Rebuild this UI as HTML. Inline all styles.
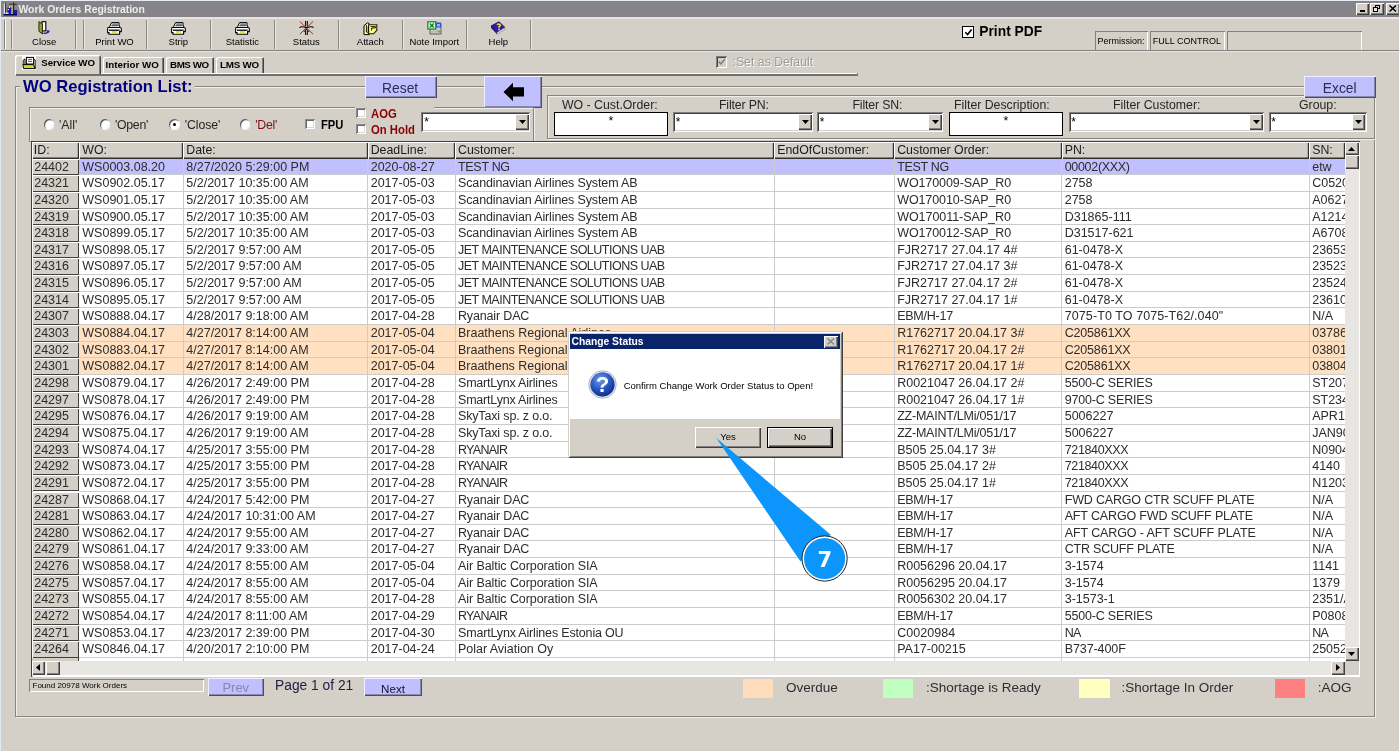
<!DOCTYPE html><html><head><meta charset="utf-8"><title>Work Orders Registration</title><style>
html,body{margin:0;padding:0;}
body{width:1399px;height:751px;overflow:hidden;background:#d4d0c8;position:relative;font-family:"Liberation Sans",sans-serif;color:#000;}
div{position:absolute;box-sizing:border-box;}
.t{white-space:pre;}
.tb{font-size:9.5px;line-height:11px;text-align:center;white-space:pre;color:#000;}
.sepd{background:#808080;width:1px;}
.sepl{background:#fff;width:1px;}
.raised{box-shadow:inset 1px 1px 0 #fff,inset -1px -1px 0 #404040,inset -2px -2px 0 #808080;}
.btnl{background:#c0c0ff;box-shadow:inset 1px 1px 0 #f0f0ff,inset -1px -1px 0 #4c4c66,inset -2px -2px 0 #8888b4;text-align:center;white-space:pre;}
.sunk{box-shadow:inset 1px 1px 0 #808080,inset -1px -1px 0 #fff,inset 2px 2px 0 #404040,inset -2px -2px 0 #d4d0c8;background:#fff;}
.chk{box-shadow:inset 1px 1px 0 #8c8c8c,inset -1px -1px 0 #fff,inset 2px 2px 0 #6a6a6a,inset -2px -2px 0 #dcd9d2;background:#fff;}
.sunk1{box-shadow:inset 1px 1px 0 #808080,inset -1px -1px 0 #fff;}
.etch{border:1px solid #86847f;box-shadow:1px 1px 0 #f0efec,inset 1px 1px 0 #f0efec;}
.lbl{font-size:12.3px;line-height:14px;white-space:pre;color:#262626;}
.cell{font-size:12.5px;white-space:pre;overflow:hidden;color:#2c2c2c;padding-left:3px;}
.hd{background:#d4d0c8;font-size:12.35px;white-space:pre;overflow:hidden;color:#1a1a1a;padding-left:3px;box-shadow:inset 1px 1px 0 #fff,inset -1.2px -1.6px 0 #303030;}
.idc{background:#d4d0c8;box-shadow:inset 1px 1px 0 #fff,inset -1px -1px 0 #404040;}
.sbb{background:#d4d0c8;box-shadow:inset 1px 1px 0 #fff,inset -1px -1px 0 #404040,inset -2px -2px 0 #808080;}
.track{background:#e8e6e2;}
.nb{font-family:"Liberation Sans",sans-serif;font-weight:bold;white-space:pre;transform-origin:0 0;}
</style></head><body><div id="root" style="left:0;top:0;width:1399px;height:751px;will-change:transform;">
<div style="left:0px;top:0px;width:1399px;height:751px;background:#d4d0c8;"></div>
<div style="left:0px;top:0px;width:1399px;height:1.3px;background:#e6edf7;"></div>
<div style="left:0px;top:0px;width:1.3px;height:751px;background:#e3eaf3;"></div>
<div style="left:1.3px;top:1.3px;width:1398px;height:15.5px;background:#868488;"></div>
<div style="left:1.3px;top:16.8px;width:1398px;height:2.2px;background:#e5e4e1;"></div>
<svg style="position:absolute;left:0px;top:0px" width="24" height="18" viewBox="0 0 24 18"><rect x="3.8" y="3.6" width="1.1" height="10" fill="#f0f0f0"/><rect x="5" y="3.2" width="1" height="9.6" fill="#34342c"/><rect x="9.2" y="4.6" width="3.8" height="9.4" fill="#a8a880"/><rect x="9" y="3.8" width="7.8" height="1" fill="#383824"/><rect x="13" y="2.4" width="1.1" height="12" fill="#26261a"/><rect x="7.4" y="7.2" width="3.8" height="6.9" rx="1" fill="#1818a0"/><rect x="14.1" y="10" width="3" height="5" rx="0.8" fill="#1818a0"/><rect x="8.8" y="6.8" width="1.3" height="1.1" fill="#fff"/><rect x="7.8" y="9" width="1.2" height="1" fill="#fff"/><rect x="5.6" y="12.6" width="3" height="1.2" fill="#e8e8f4"/><rect x="3.6" y="14" width="13.3" height="1.5" fill="#000058"/></svg>
<div class="t" style="left:18.5px;top:2.5px;font-weight:bold;font-size:10.4px;line-height:13px;color:#ececec;">Work Orders Registration</div>
<div style="left:1356.1px;top:3px;width:13px;height:11.5px;background:#d4d0c8;box-shadow:inset 1px 1px 0 #fff,inset -1px -1px 0 #404040,inset -2px -2px 0 #808080;"></div>
<div style="left:1360.1px;top:10.3px;width:5px;height:1.7px;background:#000;"></div>
<div style="left:1370px;top:3px;width:13.5px;height:11.5px;background:#d4d0c8;box-shadow:inset 1px 1px 0 #fff,inset -1px -1px 0 #404040,inset -2px -2px 0 #808080;"></div>
<div style="left:1375.2px;top:4.6px;width:5px;height:4.6px;border:1px solid #000;border-top:1.7px solid #000;"></div>
<div style="left:1372.8px;top:7.3px;width:5px;height:4.6px;border:1px solid #000;border-top:1.7px solid #000;background:#e8e6e2;"></div>
<div style="left:1386px;top:3px;width:13.5px;height:11.5px;background:#d4d0c8;box-shadow:inset 1px 1px 0 #fff,inset -1px -1px 0 #404040,inset -2px -2px 0 #808080;"></div>
<svg style="position:absolute;left:1389.2px;top:5px" width="8" height="7" viewBox="0 0 8 7"><path d="M0.5 0.5 L7 6.5 M7 0.5 L0.5 6.5" stroke="#000" stroke-width="1.5"/></svg>
<div style="left:4.3px;top:20px;width:1px;height:28.5px;background:#808080;"></div>
<div style="left:5.3px;top:20px;width:1px;height:28.5px;background:#fff;"></div>
<div style="left:11.3px;top:20px;width:1px;height:28.5px;background:#8a8884;"></div>
<div style="left:12.3px;top:20px;width:1px;height:28.5px;background:#ece9e4;"></div>
<div style="left:75.3px;top:20px;width:1px;height:28.5px;background:#8a8884;"></div>
<div style="left:76.3px;top:20px;width:1px;height:28.5px;background:#ece9e4;"></div>
<div style="left:82.6px;top:20px;width:1px;height:28.5px;background:#8a8884;"></div>
<div style="left:83.6px;top:20px;width:1px;height:28.5px;background:#ece9e4;"></div>
<div style="left:146.4px;top:20px;width:1px;height:28.5px;background:#8a8884;"></div>
<div style="left:147.4px;top:20px;width:1px;height:28.5px;background:#ece9e4;"></div>
<div style="left:210.4px;top:20px;width:1px;height:28.5px;background:#8a8884;"></div>
<div style="left:211.4px;top:20px;width:1px;height:28.5px;background:#ece9e4;"></div>
<div style="left:274.3px;top:20px;width:1px;height:28.5px;background:#8a8884;"></div>
<div style="left:275.3px;top:20px;width:1px;height:28.5px;background:#ece9e4;"></div>
<div style="left:338.2px;top:20px;width:1px;height:28.5px;background:#8a8884;"></div>
<div style="left:339.2px;top:20px;width:1px;height:28.5px;background:#ece9e4;"></div>
<div style="left:402.3px;top:20px;width:1px;height:28.5px;background:#8a8884;"></div>
<div style="left:403.3px;top:20px;width:1px;height:28.5px;background:#ece9e4;"></div>
<div style="left:466.4px;top:20px;width:1px;height:28.5px;background:#8a8884;"></div>
<div style="left:467.4px;top:20px;width:1px;height:28.5px;background:#ece9e4;"></div>
<div style="left:530.3px;top:20px;width:1px;height:28.5px;background:#8a8884;"></div>
<div style="left:531.3px;top:20px;width:1px;height:28.5px;background:#ece9e4;"></div>
<div style="left:1.3px;top:49.8px;width:1398px;height:1px;background:#808080;"></div>
<div style="left:1.3px;top:50.8px;width:1398px;height:1px;background:#e8e6e2;"></div>
<div style="left:37.7px;top:21px;width:13px;height:15px;"><svg width="13" height="14" viewBox="0 0 13 14"><rect x="4" y="0.7" width="3.8" height="9.2" fill="#fff" stroke="#000" stroke-width="1.1"/><path d="M0.9 0.6 L4.4 3 L4.4 13 L0.9 10.2 Z" fill="#98a020" stroke="#202000" stroke-width="0.9"/><path d="M5.5 12.2 Q9 13 10.2 10.4" stroke="#1a1a9a" stroke-width="1.4" fill="none"/><path d="M8.6 9.2 L11.8 9.6 L10.6 12.2 Z" fill="#1a1a9a"/></svg></div>
<div class="tb" style="left:4.2px;top:35.8px;width:80px;">Close</div>
<div style="left:107px;top:21px;width:15px;height:15px;"><svg width="15" height="13" viewBox="0 0 15 13"><path d="M4.6 0.6 L12 0.6 L12 3 L13 5.5 L2.2 5.5 Z" fill="#fff" stroke="#000" stroke-width="1"/><path d="M5.2 2.1 L11 2.1 M4.4 3.7 L11.4 3.7" stroke="#000" stroke-width="0.8"/><path d="M1.4 5.5 L13 5.5 Q14.3 5.5 14.3 6.8 L14.3 9.6 L12.6 9.6 L12.6 12.3 L2 12.3 L2 10.6 L0.6 10.6 L0.6 6.6 Q0.6 5.5 1.4 5.5 Z" fill="#fff" stroke="#000" stroke-width="1.1"/><path d="M2 8.2 L12.6 8.2" stroke="#000" stroke-width="1.3"/><rect x="5" y="9.2" width="5.2" height="1.5" fill="#d0d420"/></svg></div>
<div class="tb" style="left:74.5px;top:35.8px;width:80px;">Print WO</div>
<div style="left:170.9px;top:21px;width:15px;height:15px;"><svg width="15" height="13" viewBox="0 0 15 13"><path d="M4.6 0.6 L12 0.6 L12 3 L13 5.5 L2.2 5.5 Z" fill="#fff" stroke="#000" stroke-width="1"/><path d="M5.2 2.1 L11 2.1 M4.4 3.7 L11.4 3.7" stroke="#000" stroke-width="0.8"/><path d="M1.4 5.5 L13 5.5 Q14.3 5.5 14.3 6.8 L14.3 9.6 L12.6 9.6 L12.6 12.3 L2 12.3 L2 10.6 L0.6 10.6 L0.6 6.6 Q0.6 5.5 1.4 5.5 Z" fill="#fff" stroke="#000" stroke-width="1.1"/><path d="M2 8.2 L12.6 8.2" stroke="#000" stroke-width="1.3"/><rect x="5" y="9.2" width="5.2" height="1.5" fill="#d0d420"/></svg></div>
<div class="tb" style="left:138.4px;top:35.8px;width:80px;">Strip</div>
<div style="left:234.9px;top:21px;width:15px;height:15px;"><svg width="15" height="13" viewBox="0 0 15 13"><path d="M4.6 0.6 L12 0.6 L12 3 L13 5.5 L2.2 5.5 Z" fill="#fff" stroke="#000" stroke-width="1"/><path d="M5.2 2.1 L11 2.1 M4.4 3.7 L11.4 3.7" stroke="#000" stroke-width="0.8"/><path d="M1.4 5.5 L13 5.5 Q14.3 5.5 14.3 6.8 L14.3 9.6 L12.6 9.6 L12.6 12.3 L2 12.3 L2 10.6 L0.6 10.6 L0.6 6.6 Q0.6 5.5 1.4 5.5 Z" fill="#fff" stroke="#000" stroke-width="1.1"/><path d="M2 8.2 L12.6 8.2" stroke="#000" stroke-width="1.3"/><rect x="5" y="9.2" width="5.2" height="1.5" fill="#d0d420"/></svg></div>
<div class="tb" style="left:202.4px;top:35.8px;width:80px;">Statistic</div>
<div style="left:298.8px;top:21px;width:15px;height:15px;"><svg width="15" height="14" viewBox="0 0 15 14"><path d="M0.8 0.5 L14 13.2 M14 0.5 L0.8 13.2" stroke="#c81818" stroke-width="1"/><path d="M0.5 6.6 Q2 5 7.4 6.6 Q13 5 14.5 6.6" stroke="#000" stroke-width="1.1" fill="none"/><path d="M6.6 0 L6.6 5 M8.3 0 L8.3 5 M6.6 14 L6.6 9.5 M8.3 14 L8.3 9.5 M5 10.8 L7.45 8 L10 10.8" stroke="#000" stroke-width="1" fill="none"/></svg></div>
<div class="tb" style="left:266.3px;top:35.8px;width:80px;">Status</div>
<div style="left:362.8px;top:21.5px;width:15px;height:15px;"><svg width="15" height="14" viewBox="0 0 15 14"><path d="M1 3.6 L4.6 0.8 L6.2 1.6 L6.2 12.6 L1 12.6 Z" fill="#ffff98" stroke="#000" stroke-width="1"/><path d="M5.6 2.8 L13.8 2.8 L13.8 8.2 L10.6 11.8 L5.6 11.8 Z" fill="#ffff80" stroke="#202000" stroke-width="1.1"/><path d="M7.6 4.6 L12.4 4.6 L12.4 6 L8.6 6 L8.6 8.6" stroke="#000" stroke-width="0.9" fill="none"/><path d="M3.4 3 L3.4 10 Q4.4 11.2 5.2 10 L5.2 4.5" stroke="#000" stroke-width="0.9" fill="none"/></svg></div>
<div class="tb" style="left:330.3px;top:35.8px;width:80px;">Attach</div>
<div style="left:426.8px;top:20.6px;width:15px;height:15px;"><svg width="15" height="14" viewBox="0 0 15 14"><rect x="3" y="3" width="11" height="10" fill="#c8c8c8" stroke="#606060" stroke-width="1"/><rect x="4.5" y="9.5" width="5" height="2" fill="#a8c8a8"/><rect x="10.5" y="9.5" width="2.5" height="2" fill="#909090"/><rect x="8.5" y="1.5" width="5.5" height="5" fill="#3050d0"/><rect x="10" y="3" width="3" height="2.5" fill="#90b0ff"/><rect x="0.8" y="0.8" width="8" height="7.2" fill="#e8f8e8" stroke="#108020" stroke-width="1.2"/><path d="M2.8 2.5 L6.8 6.5 M6.8 2.5 L2.8 6.5" stroke="#108020" stroke-width="1.5"/></svg></div>
<div class="tb" style="left:394.3px;top:35.8px;width:80px;">Note Import</div>
<div style="left:490.3px;top:21px;width:16px;height:15px;"><svg width="16" height="14" viewBox="0 0 16 14"><path d="M1 5 L9 0.8 L15 6.5 L7 11.5 Z" fill="#3020a0" stroke="#100850" stroke-width="0.8"/><path d="M1 5 L7 11.5 L7 13.2 L1 6.8 Z" fill="#181070"/><path d="M7 11.5 L15 6.5 L15 8.3 L7 13.2 Z" fill="#f0f0f0" stroke="#606060" stroke-width="0.5"/><path d="M7 3.8 Q8.5 2.2 10 3.5 Q10.8 4.6 8.8 5.8 L8.9 6.8" stroke="#ffe040" stroke-width="1.5" fill="none"/><circle cx="9.1" cy="8.4" r="0.9" fill="#ffe040"/></svg></div>
<div class="tb" style="left:458.3px;top:35.8px;width:80px;">Help</div>
<div style="left:961.8px;top:25.8px;width:11.9px;height:11.9px;border:1.6px solid #000;background:#fff;"></div>
<svg style="position:absolute;left:963.5px;top:27.5px" width="9" height="9" viewBox="0 0 9 9"><path d="M1.3 4.2 L3.6 6.6 L7.6 1.6" stroke="#000" stroke-width="1.6" fill="none"/></svg>
<div class="t" style="left:979.3px;top:23.5px;font-weight:bold;font-size:13.8px;line-height:16px;color:#000;">Print PDF</div>
<div style="left:1095px;top:31px;width:52.5px;height:19px;box-shadow:inset 1px 1px 0 #808080,inset -1px 0 0 #fff;"></div>
<div style="left:1150px;top:31px;width:74.5px;height:19px;box-shadow:inset 1px 1px 0 #808080,inset -1px 0 0 #fff;"></div>
<div style="left:1227px;top:31px;width:135px;height:19px;box-shadow:inset 1px 1px 0 #808080,inset -1px 0 0 #fff;"></div>
<div class="t" style="left:1097.5px;top:36px;font-size:9px;line-height:11px;">Permission:</div>
<div class="t" style="left:1152.8px;top:36px;font-size:9px;line-height:11px;">FULL CONTROL</div>
<div style="left:101px;top:73px;width:756px;height:1.2px;background:#fff;"></div>
<div style="left:102.5px;top:57.2px;width:61.5px;height:16.2px;background:#d4d0c8;border-radius:2px 2px 0 0;box-shadow:inset 1px 1px 0 #fff,inset -1px 0 0 #404040,inset -2px 0 0 #808080;"></div>
<div class="t" style="left:105.5px;top:58.6px;font-weight:bold;font-size:9.8px;line-height:12px;">Interior WO</div>
<div style="left:166px;top:57.2px;width:48px;height:16.2px;background:#d4d0c8;border-radius:2px 2px 0 0;box-shadow:inset 1px 1px 0 #fff,inset -1px 0 0 #404040,inset -2px 0 0 #808080;"></div>
<div class="t" style="left:170px;top:58.6px;font-weight:bold;font-size:9.8px;line-height:12px;letter-spacing:-0.45px;">BMS WO</div>
<div style="left:216px;top:57.2px;width:48px;height:16.2px;background:#d4d0c8;border-radius:2px 2px 0 0;box-shadow:inset 1px 1px 0 #fff,inset -1px 0 0 #404040,inset -2px 0 0 #808080;"></div>
<div class="t" style="left:220px;top:58.6px;font-weight:bold;font-size:9.8px;line-height:12px;letter-spacing:-0.25px;">LMS WO</div>
<div style="left:15.2px;top:55.3px;width:86.3px;height:19.6px;background:#d4d0c8;border-radius:2px 2px 0 0;box-shadow:inset 1.2px 1.2px 0 #fff,inset -1px 0 0 #404040,inset -2px 0 0 #808080;"></div>
<div style="left:16.2px;top:74.3px;width:841px;height:1.3px;background:#707070;"></div>
<div style="left:856.6px;top:72.6px;width:1px;height:3px;background:#808080;"></div>
<div style="left:22px;top:56px;width:14px;height:14px;background:#fbfbf8;"></div>
<svg style="position:absolute;left:22px;top:56px" width="14" height="14" viewBox="0 0 14 14"><path d="M1.2 8.6 L1.2 4.2 L3 3 L3 8.6 Z" fill="#d8d8d0" stroke="#000" stroke-width="0.9"/><path d="M11.2 3 L13.2 4 L13.2 12.4 L11.2 9" fill="#e8e8e0" stroke="#000" stroke-width="0.9"/><rect x="4.4" y="1.4" width="7.2" height="6.6" fill="#fff" stroke="#000" stroke-width="1"/><path d="M6 3.4 L10 3.4 M6 5.4 L10 5.4" stroke="#505060" stroke-width="1"/><path d="M0.8 8.6 L11.4 8.6 L13.2 12.6 L1.6 12.6 Z" fill="#c8dc28" stroke="#000" stroke-width="1"/></svg>
<div class="t" style="left:41.2px;top:57px;font-weight:bold;font-size:9.7px;line-height:12px;">Service WO</div>
<div class="sunk" style="left:715.5px;top:56px;width:11px;height:11.5px;background:#d4d0c8;"></div>
<svg style="position:absolute;left:717.5px;top:58px" width="8" height="8" viewBox="0 0 8 8"><path d="M0.8 3.6 L2.9 5.8 L6.8 1.2" stroke="#808080" stroke-width="1.6" fill="none"/></svg>
<div class="t" style="left:733.3px;top:55.6px;font-size:12.3px;line-height:14px;color:#fff;">:Set as Default</div>
<div class="t" style="left:732.5px;top:54.8px;font-size:12.3px;line-height:14px;color:#a09c94;">:Set as Default</div>
<div class="etch" style="left:15.3px;top:86.2px;width:1359.5px;height:631.3px;"></div>
<div style="left:20px;top:80px;width:175px;height:16px;background:#d4d0c8;"></div>
<div class="t" style="left:23px;top:77px;font-weight:bold;font-size:16.6px;line-height:19px;color:#000080;">WO Registration List:</div>
<div class="btnl" style="left:364.8px;top:76px;width:72.2px;height:21.6px;font-size:13.8px;line-height:25.2px;color:#2c2c54;padding-right:1.5px;">Reset</div>
<div class="btnl" style="left:484px;top:76.2px;width:57.6px;height:32.2px;"></div>
<svg style="position:absolute;left:502.5px;top:82px" width="22" height="20.5" viewBox="0 0 22 20" preserveAspectRatio="none"><path d="M0.5 9.7 L10 0.8 L10 5.2 L21 5.2 L21 14.2 L10 14.2 L10 18.8 Z" fill="#000"/></svg>
<div class="etch" style="left:29.3px;top:107.3px;width:505px;height:34.5px;"></div>
<div style="left:43.8px;top:119.2px;width:10.4px;height:10.4px;border-radius:50%;background:#fff;box-shadow:inset 1.2px 1.2px 0.5px #606060,inset -1px -1px 0.5px #f4f4f4;border:0;"></div>
<div style="left:99.8px;top:119.2px;width:10.4px;height:10.4px;border-radius:50%;background:#fff;box-shadow:inset 1.2px 1.2px 0.5px #606060,inset -1px -1px 0.5px #f4f4f4;border:0;"></div>
<div style="left:169.3px;top:119.2px;width:10.4px;height:10.4px;border-radius:50%;background:#fff;box-shadow:inset 1.2px 1.2px 0.5px #606060,inset -1px -1px 0.5px #f4f4f4;border:0;"></div>
<div style="left:172.7px;top:122.6px;width:3.6px;height:3.6px;border-radius:50%;background:#000;"></div>
<div style="left:239.8px;top:119.2px;width:10.4px;height:10.4px;border-radius:50%;background:#fff;box-shadow:inset 1.2px 1.2px 0.5px #606060,inset -1px -1px 0.5px #f4f4f4;border:0;"></div>
<div class="lbl" style="left:59px;top:118px;">&#x27;All&#x27;</div>
<div class="lbl" style="left:115px;top:118px;letter-spacing:-0.3px;">&#x27;Open&#x27;</div>
<div class="lbl" style="left:184.8px;top:118px;letter-spacing:-0.08px;">&#x27;Close&#x27;</div>
<div class="lbl" style="left:255.3px;top:118px;color:#7a1010;letter-spacing:-0.3px;">&#x27;Del&#x27;</div>
<div class="chk" style="left:304.5px;top:118.6px;width:10.5px;height:10.5px;"></div>
<div class="nb" style="left:320.6px;top:117px;font-size:13px;line-height:15px;transform:scaleX(0.86);">FPU</div>
<div style="left:354.5px;top:104px;width:79px;height:34px;background:#d4d0c8;"></div>
<div class="chk" style="left:356.2px;top:108.2px;width:10px;height:10px;"></div>
<div class="chk" style="left:356.2px;top:124.2px;width:10px;height:10px;"></div>
<div class="nb" style="left:370.8px;top:105.8px;font-size:12.8px;line-height:15px;color:#8b0000;transform:scaleX(0.88);">AOG</div>
<div class="nb" style="left:371.2px;top:122.3px;font-size:12.8px;line-height:15px;color:#8b0000;transform:scaleX(0.885);">On Hold</div>
<div class="sunk" style="left:421.4px;top:111.7px;width:108.6px;height:20.1px;"></div>
<div class="sbb" style="left:515.2px;top:113.5px;width:13.6px;height:16.9px;"></div>
<svg style="position:absolute;left:518.5px;top:120.45px" width="7" height="4" viewBox="0 0 7 4"><path d="M0 0 L7 0 L3.5 4 Z" fill="#000"/></svg>
<div class="t" style="left:424.2px;top:114.6px;font-size:12px;line-height:14px;">*</div>
<div class="etch" style="left:546.8px;top:94.8px;width:828px;height:44.7px;"></div>
<div class="btnl" style="left:1303.5px;top:76px;width:72.4px;height:21.6px;font-size:13.8px;line-height:25.2px;color:#2c2c54;">Excel</div>
<div class="lbl" style="left:562px;top:97.5px;">WO - Cust.Order:</div>
<div class="lbl" style="left:719px;top:97.5px;letter-spacing:-0.15px;">Filter PN:</div>
<div class="lbl" style="left:852.5px;top:97.5px;letter-spacing:-0.15px;">Filter SN:</div>
<div class="lbl" style="left:954px;top:97.5px;">Filter Description:</div>
<div class="lbl" style="left:1113px;top:97.5px;">Filter Customer:</div>
<div class="lbl" style="left:1299px;top:97.5px;">Group:</div>
<div style="left:553.8px;top:112.1px;width:114.2px;height:23.7px;border:1.2px solid #000;background:#fff;"></div>
<div class="t" style="left:608.5px;top:114px;font-size:12.3px;line-height:14px;">*</div>
<div class="sunk" style="left:673px;top:111.7px;width:140px;height:20.1px;"></div>
<div class="sbb" style="left:798.2px;top:113.5px;width:13.6px;height:16.9px;"></div>
<svg style="position:absolute;left:801.5px;top:120.45px" width="7" height="4" viewBox="0 0 7 4"><path d="M0 0 L7 0 L3.5 4 Z" fill="#000"/></svg>
<div class="t" style="left:675.8px;top:114.6px;font-size:12px;line-height:14px;">*</div>
<div class="sunk" style="left:817px;top:111.7px;width:126px;height:20.1px;"></div>
<div class="sbb" style="left:928.2px;top:113.5px;width:13.6px;height:16.9px;"></div>
<svg style="position:absolute;left:931.5px;top:120.45px" width="7" height="4" viewBox="0 0 7 4"><path d="M0 0 L7 0 L3.5 4 Z" fill="#000"/></svg>
<div class="t" style="left:819.8px;top:114.6px;font-size:12px;line-height:14px;">*</div>
<div style="left:948.8px;top:112.1px;width:114px;height:23.7px;border:1.2px solid #000;background:#fff;"></div>
<div class="t" style="left:1003.4px;top:114px;font-size:12.3px;line-height:14px;">*</div>
<div class="sunk" style="left:1068.5px;top:111.7px;width:195.5px;height:20.1px;"></div>
<div class="sbb" style="left:1249.2px;top:113.5px;width:13.6px;height:16.9px;"></div>
<svg style="position:absolute;left:1252.5px;top:120.45px" width="7" height="4" viewBox="0 0 7 4"><path d="M0 0 L7 0 L3.5 4 Z" fill="#000"/></svg>
<div class="t" style="left:1071.3px;top:114.6px;font-size:12px;line-height:14px;">*</div>
<div class="sunk" style="left:1268.5px;top:111.7px;width:98px;height:20.1px;"></div>
<div class="sbb" style="left:1351.7px;top:113.5px;width:13.6px;height:16.9px;"></div>
<svg style="position:absolute;left:1355px;top:120.45px" width="7" height="4" viewBox="0 0 7 4"><path d="M0 0 L7 0 L3.5 4 Z" fill="#000"/></svg>
<div class="t" style="left:1271.3px;top:114.6px;font-size:12px;line-height:14px;">*</div>
<div style="left:30.6px;top:141.2px;width:1329.2px;height:535.8px;background:#fff;box-shadow:inset 1.3px 1.3px 0 #404040,inset -1px -1px 0 #fff;"></div>
<div class="hd" style="left:31.8px;top:142.3px;width:47.5px;height:16.3px;line-height:17.5px;padding-left:2px;">ID:</div>
<div class="hd" style="left:79.3px;top:142.3px;width:104px;height:16.3px;line-height:17.5px;">WO:</div>
<div class="hd" style="left:183.3px;top:142.3px;width:184.4px;height:16.3px;line-height:17.5px;">Date:</div>
<div class="hd" style="left:367.7px;top:142.3px;width:87.3px;height:16.3px;line-height:17.5px;">DeadLine:</div>
<div class="hd" style="left:455px;top:142.3px;width:319.2px;height:16.3px;line-height:17.5px;">Customer:</div>
<div class="hd" style="left:774.2px;top:142.3px;width:120px;height:16.3px;line-height:17.5px;">EndOfCustomer:</div>
<div class="hd" style="left:894.2px;top:142.3px;width:167.5px;height:16.3px;line-height:17.5px;">Customer Order:</div>
<div class="hd" style="left:1061.7px;top:142.3px;width:247.5px;height:16.3px;line-height:17.5px;">PN:</div>
<div class="hd" style="left:1309.2px;top:142.3px;width:35.6px;height:16.3px;line-height:17.5px;">SN:</div>
<div style="left:79.3px;top:158.6px;width:1265.5px;height:16.645px;background:#c0c0ff;"></div>
<div class="cell idc" style="left:31.8px;top:158.6px;width:47.5px;height:16.645px;line-height:16.645px;padding-left:2.4px;">24402</div>
<div class="cell" style="left:79.3px;top:158.6px;width:104px;height:16.645px;line-height:16.645px;">WS0003.08.20</div>
<div class="cell" style="left:183.3px;top:158.6px;width:184.4px;height:16.645px;line-height:16.645px;">8/27/2020 5:29:00 PM</div>
<div class="cell" style="left:367.7px;top:158.6px;width:87.3px;height:16.645px;line-height:16.645px;">2020-08-27</div>
<div class="cell" style="left:455px;top:158.6px;width:319.2px;height:16.645px;line-height:16.645px;letter-spacing:-0.309px;">TEST NG</div>
<div class="cell" style="left:894.2px;top:158.6px;width:167.5px;height:16.645px;line-height:16.645px;letter-spacing:-0.309px;">TEST NG</div>
<div class="cell" style="left:1061.7px;top:158.6px;width:247.5px;height:16.645px;line-height:16.645px;letter-spacing:-0.312px;">00002(XXX)</div>
<div class="cell" style="left:1309.2px;top:158.6px;width:35.6px;height:16.645px;line-height:16.645px;">etw</div>
<div style="left:79.3px;top:174.245px;width:1265.5px;height:1px;background:#cccccc;"></div>
<div style="left:79.3px;top:175.245px;width:1265.5px;height:16.645px;background:#fff;"></div>
<div class="cell idc" style="left:31.8px;top:175.245px;width:47.5px;height:16.645px;line-height:16.645px;padding-left:2.4px;">24321</div>
<div class="cell" style="left:79.3px;top:175.245px;width:104px;height:16.645px;line-height:16.645px;">WS0902.05.17</div>
<div class="cell" style="left:183.3px;top:175.245px;width:184.4px;height:16.645px;line-height:16.645px;">5/2/2017 10:35:00 AM</div>
<div class="cell" style="left:367.7px;top:175.245px;width:87.3px;height:16.645px;line-height:16.645px;">2017-05-03</div>
<div class="cell" style="left:455px;top:175.245px;width:319.2px;height:16.645px;line-height:16.645px;letter-spacing:-0.126px;">Scandinavian Airlines System AB</div>
<div class="cell" style="left:894.2px;top:175.245px;width:167.5px;height:16.645px;line-height:16.645px;letter-spacing:-0.096px;">WO170009-SAP_R0</div>
<div class="cell" style="left:1061.7px;top:175.245px;width:247.5px;height:16.645px;line-height:16.645px;">2758</div>
<div class="cell" style="left:1309.2px;top:175.245px;width:35.6px;height:16.645px;line-height:16.645px;">C0520</div>
<div style="left:79.3px;top:190.89px;width:1265.5px;height:1px;background:#cccccc;"></div>
<div style="left:79.3px;top:191.89px;width:1265.5px;height:16.645px;background:#fff;"></div>
<div class="cell idc" style="left:31.8px;top:191.89px;width:47.5px;height:16.645px;line-height:16.645px;padding-left:2.4px;">24320</div>
<div class="cell" style="left:79.3px;top:191.89px;width:104px;height:16.645px;line-height:16.645px;">WS0901.05.17</div>
<div class="cell" style="left:183.3px;top:191.89px;width:184.4px;height:16.645px;line-height:16.645px;">5/2/2017 10:35:00 AM</div>
<div class="cell" style="left:367.7px;top:191.89px;width:87.3px;height:16.645px;line-height:16.645px;">2017-05-03</div>
<div class="cell" style="left:455px;top:191.89px;width:319.2px;height:16.645px;line-height:16.645px;letter-spacing:-0.126px;">Scandinavian Airlines System AB</div>
<div class="cell" style="left:894.2px;top:191.89px;width:167.5px;height:16.645px;line-height:16.645px;letter-spacing:-0.096px;">WO170010-SAP_R0</div>
<div class="cell" style="left:1061.7px;top:191.89px;width:247.5px;height:16.645px;line-height:16.645px;">2758</div>
<div class="cell" style="left:1309.2px;top:191.89px;width:35.6px;height:16.645px;line-height:16.645px;">A0627</div>
<div style="left:79.3px;top:207.535px;width:1265.5px;height:1px;background:#cccccc;"></div>
<div style="left:79.3px;top:208.535px;width:1265.5px;height:16.645px;background:#fff;"></div>
<div class="cell idc" style="left:31.8px;top:208.535px;width:47.5px;height:16.645px;line-height:16.645px;padding-left:2.4px;">24319</div>
<div class="cell" style="left:79.3px;top:208.535px;width:104px;height:16.645px;line-height:16.645px;">WS0900.05.17</div>
<div class="cell" style="left:183.3px;top:208.535px;width:184.4px;height:16.645px;line-height:16.645px;">5/2/2017 10:35:00 AM</div>
<div class="cell" style="left:367.7px;top:208.535px;width:87.3px;height:16.645px;line-height:16.645px;">2017-05-03</div>
<div class="cell" style="left:455px;top:208.535px;width:319.2px;height:16.645px;line-height:16.645px;letter-spacing:-0.126px;">Scandinavian Airlines System AB</div>
<div class="cell" style="left:894.2px;top:208.535px;width:167.5px;height:16.645px;line-height:16.645px;letter-spacing:-0.052px;">WO170011-SAP_R0</div>
<div class="cell" style="left:1061.7px;top:208.535px;width:247.5px;height:16.645px;line-height:16.645px;">D31865-111</div>
<div class="cell" style="left:1309.2px;top:208.535px;width:35.6px;height:16.645px;line-height:16.645px;">A1214</div>
<div style="left:79.3px;top:224.18px;width:1265.5px;height:1px;background:#cccccc;"></div>
<div style="left:79.3px;top:225.18px;width:1265.5px;height:16.645px;background:#fff;"></div>
<div class="cell idc" style="left:31.8px;top:225.18px;width:47.5px;height:16.645px;line-height:16.645px;padding-left:2.4px;">24318</div>
<div class="cell" style="left:79.3px;top:225.18px;width:104px;height:16.645px;line-height:16.645px;">WS0899.05.17</div>
<div class="cell" style="left:183.3px;top:225.18px;width:184.4px;height:16.645px;line-height:16.645px;">5/2/2017 10:35:00 AM</div>
<div class="cell" style="left:367.7px;top:225.18px;width:87.3px;height:16.645px;line-height:16.645px;">2017-05-03</div>
<div class="cell" style="left:455px;top:225.18px;width:319.2px;height:16.645px;line-height:16.645px;letter-spacing:-0.126px;">Scandinavian Airlines System AB</div>
<div class="cell" style="left:894.2px;top:225.18px;width:167.5px;height:16.645px;line-height:16.645px;letter-spacing:-0.096px;">WO170012-SAP_R0</div>
<div class="cell" style="left:1061.7px;top:225.18px;width:247.5px;height:16.645px;line-height:16.645px;">D31517-621</div>
<div class="cell" style="left:1309.2px;top:225.18px;width:35.6px;height:16.645px;line-height:16.645px;">A6708</div>
<div style="left:79.3px;top:240.825px;width:1265.5px;height:1px;background:#cccccc;"></div>
<div style="left:79.3px;top:241.825px;width:1265.5px;height:16.645px;background:#fff;"></div>
<div class="cell idc" style="left:31.8px;top:241.825px;width:47.5px;height:16.645px;line-height:16.645px;padding-left:2.4px;">24317</div>
<div class="cell" style="left:79.3px;top:241.825px;width:104px;height:16.645px;line-height:16.645px;">WS0898.05.17</div>
<div class="cell" style="left:183.3px;top:241.825px;width:184.4px;height:16.645px;line-height:16.645px;">5/2/2017 9:57:00 AM</div>
<div class="cell" style="left:367.7px;top:241.825px;width:87.3px;height:16.645px;line-height:16.645px;">2017-05-05</div>
<div class="cell" style="left:455px;top:241.825px;width:319.2px;height:16.645px;line-height:16.645px;letter-spacing:-0.507px;">JET MAINTENANCE SOLUTIONS UAB</div>
<div class="cell" style="left:894.2px;top:241.825px;width:167.5px;height:16.645px;line-height:16.645px;">FJR2717 27.04.17 4#</div>
<div class="cell" style="left:1061.7px;top:241.825px;width:247.5px;height:16.645px;line-height:16.645px;">61-0478-X</div>
<div class="cell" style="left:1309.2px;top:241.825px;width:35.6px;height:16.645px;line-height:16.645px;">23653</div>
<div style="left:79.3px;top:257.47px;width:1265.5px;height:1px;background:#cccccc;"></div>
<div style="left:79.3px;top:258.47px;width:1265.5px;height:16.645px;background:#fff;"></div>
<div class="cell idc" style="left:31.8px;top:258.47px;width:47.5px;height:16.645px;line-height:16.645px;padding-left:2.4px;">24316</div>
<div class="cell" style="left:79.3px;top:258.47px;width:104px;height:16.645px;line-height:16.645px;">WS0897.05.17</div>
<div class="cell" style="left:183.3px;top:258.47px;width:184.4px;height:16.645px;line-height:16.645px;">5/2/2017 9:57:00 AM</div>
<div class="cell" style="left:367.7px;top:258.47px;width:87.3px;height:16.645px;line-height:16.645px;">2017-05-05</div>
<div class="cell" style="left:455px;top:258.47px;width:319.2px;height:16.645px;line-height:16.645px;letter-spacing:-0.507px;">JET MAINTENANCE SOLUTIONS UAB</div>
<div class="cell" style="left:894.2px;top:258.47px;width:167.5px;height:16.645px;line-height:16.645px;">FJR2717 27.04.17 3#</div>
<div class="cell" style="left:1061.7px;top:258.47px;width:247.5px;height:16.645px;line-height:16.645px;">61-0478-X</div>
<div class="cell" style="left:1309.2px;top:258.47px;width:35.6px;height:16.645px;line-height:16.645px;">23523</div>
<div style="left:79.3px;top:274.115px;width:1265.5px;height:1px;background:#cccccc;"></div>
<div style="left:79.3px;top:275.115px;width:1265.5px;height:16.645px;background:#fff;"></div>
<div class="cell idc" style="left:31.8px;top:275.115px;width:47.5px;height:16.645px;line-height:16.645px;padding-left:2.4px;">24315</div>
<div class="cell" style="left:79.3px;top:275.115px;width:104px;height:16.645px;line-height:16.645px;">WS0896.05.17</div>
<div class="cell" style="left:183.3px;top:275.115px;width:184.4px;height:16.645px;line-height:16.645px;">5/2/2017 9:57:00 AM</div>
<div class="cell" style="left:367.7px;top:275.115px;width:87.3px;height:16.645px;line-height:16.645px;">2017-05-05</div>
<div class="cell" style="left:455px;top:275.115px;width:319.2px;height:16.645px;line-height:16.645px;letter-spacing:-0.507px;">JET MAINTENANCE SOLUTIONS UAB</div>
<div class="cell" style="left:894.2px;top:275.115px;width:167.5px;height:16.645px;line-height:16.645px;">FJR2717 27.04.17 2#</div>
<div class="cell" style="left:1061.7px;top:275.115px;width:247.5px;height:16.645px;line-height:16.645px;">61-0478-X</div>
<div class="cell" style="left:1309.2px;top:275.115px;width:35.6px;height:16.645px;line-height:16.645px;">23524</div>
<div style="left:79.3px;top:290.76px;width:1265.5px;height:1px;background:#cccccc;"></div>
<div style="left:79.3px;top:291.76px;width:1265.5px;height:16.645px;background:#fff;"></div>
<div class="cell idc" style="left:31.8px;top:291.76px;width:47.5px;height:16.645px;line-height:16.645px;padding-left:2.4px;">24314</div>
<div class="cell" style="left:79.3px;top:291.76px;width:104px;height:16.645px;line-height:16.645px;">WS0895.05.17</div>
<div class="cell" style="left:183.3px;top:291.76px;width:184.4px;height:16.645px;line-height:16.645px;">5/2/2017 9:57:00 AM</div>
<div class="cell" style="left:367.7px;top:291.76px;width:87.3px;height:16.645px;line-height:16.645px;">2017-05-05</div>
<div class="cell" style="left:455px;top:291.76px;width:319.2px;height:16.645px;line-height:16.645px;letter-spacing:-0.507px;">JET MAINTENANCE SOLUTIONS UAB</div>
<div class="cell" style="left:894.2px;top:291.76px;width:167.5px;height:16.645px;line-height:16.645px;">FJR2717 27.04.17 1#</div>
<div class="cell" style="left:1061.7px;top:291.76px;width:247.5px;height:16.645px;line-height:16.645px;">61-0478-X</div>
<div class="cell" style="left:1309.2px;top:291.76px;width:35.6px;height:16.645px;line-height:16.645px;">23610</div>
<div style="left:79.3px;top:307.405px;width:1265.5px;height:1px;background:#cccccc;"></div>
<div style="left:79.3px;top:308.405px;width:1265.5px;height:16.645px;background:#fff;"></div>
<div class="cell idc" style="left:31.8px;top:308.405px;width:47.5px;height:16.645px;line-height:16.645px;padding-left:2.4px;">24307</div>
<div class="cell" style="left:79.3px;top:308.405px;width:104px;height:16.645px;line-height:16.645px;">WS0888.04.17</div>
<div class="cell" style="left:183.3px;top:308.405px;width:184.4px;height:16.645px;line-height:16.645px;">4/28/2017 9:18:00 AM</div>
<div class="cell" style="left:367.7px;top:308.405px;width:87.3px;height:16.645px;line-height:16.645px;">2017-04-28</div>
<div class="cell" style="left:455px;top:308.405px;width:319.2px;height:16.645px;line-height:16.645px;letter-spacing:-0.154px;">Ryanair DAC</div>
<div class="cell" style="left:894.2px;top:308.405px;width:167.5px;height:16.645px;line-height:16.645px;letter-spacing:-0.251px;">EBM/H-17</div>
<div class="cell" style="left:1061.7px;top:308.405px;width:247.5px;height:16.645px;line-height:16.645px;letter-spacing:0.097px;">7075-T0 TO 7075-T62/.040&quot;</div>
<div class="cell" style="left:1309.2px;top:308.405px;width:35.6px;height:16.645px;line-height:16.645px;">N/A</div>
<div style="left:79.3px;top:324.05px;width:1265.5px;height:1px;background:#cccccc;"></div>
<div style="left:79.3px;top:325.05px;width:1265.5px;height:16.645px;background:#ffe0c0;"></div>
<div class="cell idc" style="left:31.8px;top:325.05px;width:47.5px;height:16.645px;line-height:16.645px;padding-left:2.4px;">24303</div>
<div class="cell" style="left:79.3px;top:325.05px;width:104px;height:16.645px;line-height:16.645px;">WS0884.04.17</div>
<div class="cell" style="left:183.3px;top:325.05px;width:184.4px;height:16.645px;line-height:16.645px;">4/27/2017 8:14:00 AM</div>
<div class="cell" style="left:367.7px;top:325.05px;width:87.3px;height:16.645px;line-height:16.645px;">2017-05-04</div>
<div class="cell" style="left:455px;top:325.05px;width:319.2px;height:16.645px;line-height:16.645px;letter-spacing:-0.015px;">Braathens Regional Airlines</div>
<div class="cell" style="left:894.2px;top:325.05px;width:167.5px;height:16.645px;line-height:16.645px;">R1762717 20.04.17 3#</div>
<div class="cell" style="left:1061.7px;top:325.05px;width:247.5px;height:16.645px;line-height:16.645px;letter-spacing:-0.178px;">C205861XX</div>
<div class="cell" style="left:1309.2px;top:325.05px;width:35.6px;height:16.645px;line-height:16.645px;">03786</div>
<div style="left:79.3px;top:340.695px;width:1265.5px;height:1px;background:#cccccc;"></div>
<div style="left:79.3px;top:341.695px;width:1265.5px;height:16.645px;background:#ffe0c0;"></div>
<div class="cell idc" style="left:31.8px;top:341.695px;width:47.5px;height:16.645px;line-height:16.645px;padding-left:2.4px;">24302</div>
<div class="cell" style="left:79.3px;top:341.695px;width:104px;height:16.645px;line-height:16.645px;">WS0883.04.17</div>
<div class="cell" style="left:183.3px;top:341.695px;width:184.4px;height:16.645px;line-height:16.645px;">4/27/2017 8:14:00 AM</div>
<div class="cell" style="left:367.7px;top:341.695px;width:87.3px;height:16.645px;line-height:16.645px;">2017-05-04</div>
<div class="cell" style="left:455px;top:341.695px;width:319.2px;height:16.645px;line-height:16.645px;letter-spacing:-0.015px;">Braathens Regional Airlines</div>
<div class="cell" style="left:894.2px;top:341.695px;width:167.5px;height:16.645px;line-height:16.645px;">R1762717 20.04.17 2#</div>
<div class="cell" style="left:1061.7px;top:341.695px;width:247.5px;height:16.645px;line-height:16.645px;letter-spacing:-0.178px;">C205861XX</div>
<div class="cell" style="left:1309.2px;top:341.695px;width:35.6px;height:16.645px;line-height:16.645px;">03801</div>
<div style="left:79.3px;top:357.34px;width:1265.5px;height:1px;background:#cccccc;"></div>
<div style="left:79.3px;top:358.34px;width:1265.5px;height:16.645px;background:#ffe0c0;"></div>
<div class="cell idc" style="left:31.8px;top:358.34px;width:47.5px;height:16.645px;line-height:16.645px;padding-left:2.4px;">24301</div>
<div class="cell" style="left:79.3px;top:358.34px;width:104px;height:16.645px;line-height:16.645px;">WS0882.04.17</div>
<div class="cell" style="left:183.3px;top:358.34px;width:184.4px;height:16.645px;line-height:16.645px;">4/27/2017 8:14:00 AM</div>
<div class="cell" style="left:367.7px;top:358.34px;width:87.3px;height:16.645px;line-height:16.645px;">2017-05-04</div>
<div class="cell" style="left:455px;top:358.34px;width:319.2px;height:16.645px;line-height:16.645px;letter-spacing:-0.015px;">Braathens Regional Airlines</div>
<div class="cell" style="left:894.2px;top:358.34px;width:167.5px;height:16.645px;line-height:16.645px;">R1762717 20.04.17 1#</div>
<div class="cell" style="left:1061.7px;top:358.34px;width:247.5px;height:16.645px;line-height:16.645px;letter-spacing:-0.178px;">C205861XX</div>
<div class="cell" style="left:1309.2px;top:358.34px;width:35.6px;height:16.645px;line-height:16.645px;">03804</div>
<div style="left:79.3px;top:373.985px;width:1265.5px;height:1px;background:#cccccc;"></div>
<div style="left:79.3px;top:374.985px;width:1265.5px;height:16.645px;background:#fff;"></div>
<div class="cell idc" style="left:31.8px;top:374.985px;width:47.5px;height:16.645px;line-height:16.645px;padding-left:2.4px;">24298</div>
<div class="cell" style="left:79.3px;top:374.985px;width:104px;height:16.645px;line-height:16.645px;">WS0879.04.17</div>
<div class="cell" style="left:183.3px;top:374.985px;width:184.4px;height:16.645px;line-height:16.645px;">4/26/2017 2:49:00 PM</div>
<div class="cell" style="left:367.7px;top:374.985px;width:87.3px;height:16.645px;line-height:16.645px;">2017-04-28</div>
<div class="cell" style="left:455px;top:374.985px;width:319.2px;height:16.645px;line-height:16.645px;letter-spacing:-0.197px;">SmartLynx Airlines</div>
<div class="cell" style="left:894.2px;top:374.985px;width:167.5px;height:16.645px;line-height:16.645px;">R0021047 26.04.17 2#</div>
<div class="cell" style="left:1061.7px;top:374.985px;width:247.5px;height:16.645px;line-height:16.645px;letter-spacing:-0.186px;">5500-C SERIES</div>
<div class="cell" style="left:1309.2px;top:374.985px;width:35.6px;height:16.645px;line-height:16.645px;">ST207</div>
<div style="left:79.3px;top:390.63px;width:1265.5px;height:1px;background:#cccccc;"></div>
<div style="left:79.3px;top:391.63px;width:1265.5px;height:16.645px;background:#fff;"></div>
<div class="cell idc" style="left:31.8px;top:391.63px;width:47.5px;height:16.645px;line-height:16.645px;padding-left:2.4px;">24297</div>
<div class="cell" style="left:79.3px;top:391.63px;width:104px;height:16.645px;line-height:16.645px;">WS0878.04.17</div>
<div class="cell" style="left:183.3px;top:391.63px;width:184.4px;height:16.645px;line-height:16.645px;">4/26/2017 2:49:00 PM</div>
<div class="cell" style="left:367.7px;top:391.63px;width:87.3px;height:16.645px;line-height:16.645px;">2017-04-28</div>
<div class="cell" style="left:455px;top:391.63px;width:319.2px;height:16.645px;line-height:16.645px;letter-spacing:-0.197px;">SmartLynx Airlines</div>
<div class="cell" style="left:894.2px;top:391.63px;width:167.5px;height:16.645px;line-height:16.645px;">R0021047 26.04.17 1#</div>
<div class="cell" style="left:1061.7px;top:391.63px;width:247.5px;height:16.645px;line-height:16.645px;letter-spacing:-0.186px;">9700-C SERIES</div>
<div class="cell" style="left:1309.2px;top:391.63px;width:35.6px;height:16.645px;line-height:16.645px;">ST234</div>
<div style="left:79.3px;top:407.275px;width:1265.5px;height:1px;background:#cccccc;"></div>
<div style="left:79.3px;top:408.275px;width:1265.5px;height:16.645px;background:#fff;"></div>
<div class="cell idc" style="left:31.8px;top:408.275px;width:47.5px;height:16.645px;line-height:16.645px;padding-left:2.4px;">24295</div>
<div class="cell" style="left:79.3px;top:408.275px;width:104px;height:16.645px;line-height:16.645px;">WS0876.04.17</div>
<div class="cell" style="left:183.3px;top:408.275px;width:184.4px;height:16.645px;line-height:16.645px;">4/26/2017 9:19:00 AM</div>
<div class="cell" style="left:367.7px;top:408.275px;width:87.3px;height:16.645px;line-height:16.645px;">2017-04-28</div>
<div class="cell" style="left:455px;top:408.275px;width:319.2px;height:16.645px;line-height:16.645px;letter-spacing:-0.157px;">SkyTaxi sp. z o.o.</div>
<div class="cell" style="left:894.2px;top:408.275px;width:167.5px;height:16.645px;line-height:16.645px;letter-spacing:-0.241px;">ZZ-MAINT/LMi/051/17</div>
<div class="cell" style="left:1061.7px;top:408.275px;width:247.5px;height:16.645px;line-height:16.645px;">5006227</div>
<div class="cell" style="left:1309.2px;top:408.275px;width:35.6px;height:16.645px;line-height:16.645px;">APR10</div>
<div style="left:79.3px;top:423.92px;width:1265.5px;height:1px;background:#cccccc;"></div>
<div style="left:79.3px;top:424.92px;width:1265.5px;height:16.645px;background:#fff;"></div>
<div class="cell idc" style="left:31.8px;top:424.92px;width:47.5px;height:16.645px;line-height:16.645px;padding-left:2.4px;">24294</div>
<div class="cell" style="left:79.3px;top:424.92px;width:104px;height:16.645px;line-height:16.645px;">WS0875.04.17</div>
<div class="cell" style="left:183.3px;top:424.92px;width:184.4px;height:16.645px;line-height:16.645px;">4/26/2017 9:19:00 AM</div>
<div class="cell" style="left:367.7px;top:424.92px;width:87.3px;height:16.645px;line-height:16.645px;">2017-04-28</div>
<div class="cell" style="left:455px;top:424.92px;width:319.2px;height:16.645px;line-height:16.645px;letter-spacing:-0.157px;">SkyTaxi sp. z o.o.</div>
<div class="cell" style="left:894.2px;top:424.92px;width:167.5px;height:16.645px;line-height:16.645px;letter-spacing:-0.241px;">ZZ-MAINT/LMi/051/17</div>
<div class="cell" style="left:1061.7px;top:424.92px;width:247.5px;height:16.645px;line-height:16.645px;">5006227</div>
<div class="cell" style="left:1309.2px;top:424.92px;width:35.6px;height:16.645px;line-height:16.645px;">JAN90</div>
<div style="left:79.3px;top:440.565px;width:1265.5px;height:1px;background:#cccccc;"></div>
<div style="left:79.3px;top:441.565px;width:1265.5px;height:16.645px;background:#fff;"></div>
<div class="cell idc" style="left:31.8px;top:441.565px;width:47.5px;height:16.645px;line-height:16.645px;padding-left:2.4px;">24293</div>
<div class="cell" style="left:79.3px;top:441.565px;width:104px;height:16.645px;line-height:16.645px;">WS0874.04.17</div>
<div class="cell" style="left:183.3px;top:441.565px;width:184.4px;height:16.645px;line-height:16.645px;">4/25/2017 3:55:00 PM</div>
<div class="cell" style="left:367.7px;top:441.565px;width:87.3px;height:16.645px;line-height:16.645px;">2017-04-28</div>
<div class="cell" style="left:455px;top:441.565px;width:319.2px;height:16.645px;line-height:16.645px;letter-spacing:-0.712px;">RYANAIR</div>
<div class="cell" style="left:894.2px;top:441.565px;width:167.5px;height:16.645px;line-height:16.645px;">B505 25.04.17 3#</div>
<div class="cell" style="left:1061.7px;top:441.565px;width:247.5px;height:16.645px;line-height:16.645px;letter-spacing:-0.354px;">721840XXX</div>
<div class="cell" style="left:1309.2px;top:441.565px;width:35.6px;height:16.645px;line-height:16.645px;">N0904</div>
<div style="left:79.3px;top:457.21px;width:1265.5px;height:1px;background:#cccccc;"></div>
<div style="left:79.3px;top:458.21px;width:1265.5px;height:16.645px;background:#fff;"></div>
<div class="cell idc" style="left:31.8px;top:458.21px;width:47.5px;height:16.645px;line-height:16.645px;padding-left:2.4px;">24292</div>
<div class="cell" style="left:79.3px;top:458.21px;width:104px;height:16.645px;line-height:16.645px;">WS0873.04.17</div>
<div class="cell" style="left:183.3px;top:458.21px;width:184.4px;height:16.645px;line-height:16.645px;">4/25/2017 3:55:00 PM</div>
<div class="cell" style="left:367.7px;top:458.21px;width:87.3px;height:16.645px;line-height:16.645px;">2017-04-28</div>
<div class="cell" style="left:455px;top:458.21px;width:319.2px;height:16.645px;line-height:16.645px;letter-spacing:-0.712px;">RYANAIR</div>
<div class="cell" style="left:894.2px;top:458.21px;width:167.5px;height:16.645px;line-height:16.645px;">B505 25.04.17 2#</div>
<div class="cell" style="left:1061.7px;top:458.21px;width:247.5px;height:16.645px;line-height:16.645px;letter-spacing:-0.354px;">721840XXX</div>
<div class="cell" style="left:1309.2px;top:458.21px;width:35.6px;height:16.645px;line-height:16.645px;">4140</div>
<div style="left:79.3px;top:473.855px;width:1265.5px;height:1px;background:#cccccc;"></div>
<div style="left:79.3px;top:474.855px;width:1265.5px;height:16.645px;background:#fff;"></div>
<div class="cell idc" style="left:31.8px;top:474.855px;width:47.5px;height:16.645px;line-height:16.645px;padding-left:2.4px;">24291</div>
<div class="cell" style="left:79.3px;top:474.855px;width:104px;height:16.645px;line-height:16.645px;">WS0872.04.17</div>
<div class="cell" style="left:183.3px;top:474.855px;width:184.4px;height:16.645px;line-height:16.645px;">4/25/2017 3:55:00 PM</div>
<div class="cell" style="left:367.7px;top:474.855px;width:87.3px;height:16.645px;line-height:16.645px;">2017-04-28</div>
<div class="cell" style="left:455px;top:474.855px;width:319.2px;height:16.645px;line-height:16.645px;letter-spacing:-0.712px;">RYANAIR</div>
<div class="cell" style="left:894.2px;top:474.855px;width:167.5px;height:16.645px;line-height:16.645px;">B505 25.04.17 1#</div>
<div class="cell" style="left:1061.7px;top:474.855px;width:247.5px;height:16.645px;line-height:16.645px;letter-spacing:-0.354px;">721840XXX</div>
<div class="cell" style="left:1309.2px;top:474.855px;width:35.6px;height:16.645px;line-height:16.645px;">N1203</div>
<div style="left:79.3px;top:490.5px;width:1265.5px;height:1px;background:#cccccc;"></div>
<div style="left:79.3px;top:491.5px;width:1265.5px;height:16.645px;background:#fff;"></div>
<div class="cell idc" style="left:31.8px;top:491.5px;width:47.5px;height:16.645px;line-height:16.645px;padding-left:2.4px;">24287</div>
<div class="cell" style="left:79.3px;top:491.5px;width:104px;height:16.645px;line-height:16.645px;">WS0868.04.17</div>
<div class="cell" style="left:183.3px;top:491.5px;width:184.4px;height:16.645px;line-height:16.645px;">4/24/2017 5:42:00 PM</div>
<div class="cell" style="left:367.7px;top:491.5px;width:87.3px;height:16.645px;line-height:16.645px;">2017-04-27</div>
<div class="cell" style="left:455px;top:491.5px;width:319.2px;height:16.645px;line-height:16.645px;letter-spacing:-0.154px;">Ryanair DAC</div>
<div class="cell" style="left:894.2px;top:491.5px;width:167.5px;height:16.645px;line-height:16.645px;letter-spacing:-0.251px;">EBM/H-17</div>
<div class="cell" style="left:1061.7px;top:491.5px;width:247.5px;height:16.645px;line-height:16.645px;letter-spacing:-0.176px;">FWD CARGO CTR SCUFF PLATE</div>
<div class="cell" style="left:1309.2px;top:491.5px;width:35.6px;height:16.645px;line-height:16.645px;">N/A</div>
<div style="left:79.3px;top:507.145px;width:1265.5px;height:1px;background:#cccccc;"></div>
<div style="left:79.3px;top:508.145px;width:1265.5px;height:16.645px;background:#fff;"></div>
<div class="cell idc" style="left:31.8px;top:508.145px;width:47.5px;height:16.645px;line-height:16.645px;padding-left:2.4px;">24281</div>
<div class="cell" style="left:79.3px;top:508.145px;width:104px;height:16.645px;line-height:16.645px;">WS0863.04.17</div>
<div class="cell" style="left:183.3px;top:508.145px;width:184.4px;height:16.645px;line-height:16.645px;">4/24/2017 10:31:00 AM</div>
<div class="cell" style="left:367.7px;top:508.145px;width:87.3px;height:16.645px;line-height:16.645px;">2017-04-27</div>
<div class="cell" style="left:455px;top:508.145px;width:319.2px;height:16.645px;line-height:16.645px;letter-spacing:-0.154px;">Ryanair DAC</div>
<div class="cell" style="left:894.2px;top:508.145px;width:167.5px;height:16.645px;line-height:16.645px;letter-spacing:-0.251px;">EBM/H-17</div>
<div class="cell" style="left:1061.7px;top:508.145px;width:247.5px;height:16.645px;line-height:16.645px;letter-spacing:-0.151px;">AFT CARGO FWD SCUFF PLATE</div>
<div class="cell" style="left:1309.2px;top:508.145px;width:35.6px;height:16.645px;line-height:16.645px;">N/A</div>
<div style="left:79.3px;top:523.79px;width:1265.5px;height:1px;background:#cccccc;"></div>
<div style="left:79.3px;top:524.79px;width:1265.5px;height:16.645px;background:#fff;"></div>
<div class="cell idc" style="left:31.8px;top:524.79px;width:47.5px;height:16.645px;line-height:16.645px;padding-left:2.4px;">24280</div>
<div class="cell" style="left:79.3px;top:524.79px;width:104px;height:16.645px;line-height:16.645px;">WS0862.04.17</div>
<div class="cell" style="left:183.3px;top:524.79px;width:184.4px;height:16.645px;line-height:16.645px;">4/24/2017 9:55:00 AM</div>
<div class="cell" style="left:367.7px;top:524.79px;width:87.3px;height:16.645px;line-height:16.645px;">2017-04-27</div>
<div class="cell" style="left:455px;top:524.79px;width:319.2px;height:16.645px;line-height:16.645px;letter-spacing:-0.154px;">Ryanair DAC</div>
<div class="cell" style="left:894.2px;top:524.79px;width:167.5px;height:16.645px;line-height:16.645px;letter-spacing:-0.251px;">EBM/H-17</div>
<div class="cell" style="left:1061.7px;top:524.79px;width:247.5px;height:16.645px;line-height:16.645px;letter-spacing:-0.103px;">AFT CARGO - AFT SCUFF PLATE</div>
<div class="cell" style="left:1309.2px;top:524.79px;width:35.6px;height:16.645px;line-height:16.645px;">N/A</div>
<div style="left:79.3px;top:540.435px;width:1265.5px;height:1px;background:#cccccc;"></div>
<div style="left:79.3px;top:541.435px;width:1265.5px;height:16.645px;background:#fff;"></div>
<div class="cell idc" style="left:31.8px;top:541.435px;width:47.5px;height:16.645px;line-height:16.645px;padding-left:2.4px;">24279</div>
<div class="cell" style="left:79.3px;top:541.435px;width:104px;height:16.645px;line-height:16.645px;">WS0861.04.17</div>
<div class="cell" style="left:183.3px;top:541.435px;width:184.4px;height:16.645px;line-height:16.645px;">4/24/2017 9:33:00 AM</div>
<div class="cell" style="left:367.7px;top:541.435px;width:87.3px;height:16.645px;line-height:16.645px;">2017-04-27</div>
<div class="cell" style="left:455px;top:541.435px;width:319.2px;height:16.645px;line-height:16.645px;letter-spacing:-0.154px;">Ryanair DAC</div>
<div class="cell" style="left:894.2px;top:541.435px;width:167.5px;height:16.645px;line-height:16.645px;letter-spacing:-0.251px;">EBM/H-17</div>
<div class="cell" style="left:1061.7px;top:541.435px;width:247.5px;height:16.645px;line-height:16.645px;letter-spacing:-0.199px;">CTR SCUFF PLATE</div>
<div class="cell" style="left:1309.2px;top:541.435px;width:35.6px;height:16.645px;line-height:16.645px;">N/A</div>
<div style="left:79.3px;top:557.08px;width:1265.5px;height:1px;background:#cccccc;"></div>
<div style="left:79.3px;top:558.08px;width:1265.5px;height:16.645px;background:#fff;"></div>
<div class="cell idc" style="left:31.8px;top:558.08px;width:47.5px;height:16.645px;line-height:16.645px;padding-left:2.4px;">24276</div>
<div class="cell" style="left:79.3px;top:558.08px;width:104px;height:16.645px;line-height:16.645px;">WS0858.04.17</div>
<div class="cell" style="left:183.3px;top:558.08px;width:184.4px;height:16.645px;line-height:16.645px;">4/24/2017 8:55:00 AM</div>
<div class="cell" style="left:367.7px;top:558.08px;width:87.3px;height:16.645px;line-height:16.645px;">2017-05-04</div>
<div class="cell" style="left:455px;top:558.08px;width:319.2px;height:16.645px;line-height:16.645px;letter-spacing:-0.083px;">Air Baltic Corporation SIA</div>
<div class="cell" style="left:894.2px;top:558.08px;width:167.5px;height:16.645px;line-height:16.645px;">R0056296 20.04.17</div>
<div class="cell" style="left:1061.7px;top:558.08px;width:247.5px;height:16.645px;line-height:16.645px;">3-1574</div>
<div class="cell" style="left:1309.2px;top:558.08px;width:35.6px;height:16.645px;line-height:16.645px;">1141</div>
<div style="left:79.3px;top:573.725px;width:1265.5px;height:1px;background:#cccccc;"></div>
<div style="left:79.3px;top:574.725px;width:1265.5px;height:16.645px;background:#fff;"></div>
<div class="cell idc" style="left:31.8px;top:574.725px;width:47.5px;height:16.645px;line-height:16.645px;padding-left:2.4px;">24275</div>
<div class="cell" style="left:79.3px;top:574.725px;width:104px;height:16.645px;line-height:16.645px;">WS0857.04.17</div>
<div class="cell" style="left:183.3px;top:574.725px;width:184.4px;height:16.645px;line-height:16.645px;">4/24/2017 8:55:00 AM</div>
<div class="cell" style="left:367.7px;top:574.725px;width:87.3px;height:16.645px;line-height:16.645px;">2017-05-04</div>
<div class="cell" style="left:455px;top:574.725px;width:319.2px;height:16.645px;line-height:16.645px;letter-spacing:-0.083px;">Air Baltic Corporation SIA</div>
<div class="cell" style="left:894.2px;top:574.725px;width:167.5px;height:16.645px;line-height:16.645px;">R0056295 20.04.17</div>
<div class="cell" style="left:1061.7px;top:574.725px;width:247.5px;height:16.645px;line-height:16.645px;">3-1574</div>
<div class="cell" style="left:1309.2px;top:574.725px;width:35.6px;height:16.645px;line-height:16.645px;">1379</div>
<div style="left:79.3px;top:590.37px;width:1265.5px;height:1px;background:#cccccc;"></div>
<div style="left:79.3px;top:591.37px;width:1265.5px;height:16.645px;background:#fff;"></div>
<div class="cell idc" style="left:31.8px;top:591.37px;width:47.5px;height:16.645px;line-height:16.645px;padding-left:2.4px;">24273</div>
<div class="cell" style="left:79.3px;top:591.37px;width:104px;height:16.645px;line-height:16.645px;">WS0855.04.17</div>
<div class="cell" style="left:183.3px;top:591.37px;width:184.4px;height:16.645px;line-height:16.645px;">4/24/2017 8:55:00 AM</div>
<div class="cell" style="left:367.7px;top:591.37px;width:87.3px;height:16.645px;line-height:16.645px;">2017-04-28</div>
<div class="cell" style="left:455px;top:591.37px;width:319.2px;height:16.645px;line-height:16.645px;letter-spacing:-0.083px;">Air Baltic Corporation SIA</div>
<div class="cell" style="left:894.2px;top:591.37px;width:167.5px;height:16.645px;line-height:16.645px;">R0056302 20.04.17</div>
<div class="cell" style="left:1061.7px;top:591.37px;width:247.5px;height:16.645px;line-height:16.645px;">3-1573-1</div>
<div class="cell" style="left:1309.2px;top:591.37px;width:35.6px;height:16.645px;line-height:16.645px;">2351/A</div>
<div style="left:79.3px;top:607.015px;width:1265.5px;height:1px;background:#cccccc;"></div>
<div style="left:79.3px;top:608.015px;width:1265.5px;height:16.645px;background:#fff;"></div>
<div class="cell idc" style="left:31.8px;top:608.015px;width:47.5px;height:16.645px;line-height:16.645px;padding-left:2.4px;">24272</div>
<div class="cell" style="left:79.3px;top:608.015px;width:104px;height:16.645px;line-height:16.645px;">WS0854.04.17</div>
<div class="cell" style="left:183.3px;top:608.015px;width:184.4px;height:16.645px;line-height:16.645px;">4/24/2017 8:11:00 AM</div>
<div class="cell" style="left:367.7px;top:608.015px;width:87.3px;height:16.645px;line-height:16.645px;">2017-04-29</div>
<div class="cell" style="left:455px;top:608.015px;width:319.2px;height:16.645px;line-height:16.645px;letter-spacing:-0.712px;">RYANAIR</div>
<div class="cell" style="left:894.2px;top:608.015px;width:167.5px;height:16.645px;line-height:16.645px;letter-spacing:-0.251px;">EBM/H-17</div>
<div class="cell" style="left:1061.7px;top:608.015px;width:247.5px;height:16.645px;line-height:16.645px;letter-spacing:-0.186px;">5500-C SERIES</div>
<div class="cell" style="left:1309.2px;top:608.015px;width:35.6px;height:16.645px;line-height:16.645px;">P0808</div>
<div style="left:79.3px;top:623.66px;width:1265.5px;height:1px;background:#cccccc;"></div>
<div style="left:79.3px;top:624.66px;width:1265.5px;height:16.645px;background:#fff;"></div>
<div class="cell idc" style="left:31.8px;top:624.66px;width:47.5px;height:16.645px;line-height:16.645px;padding-left:2.4px;">24271</div>
<div class="cell" style="left:79.3px;top:624.66px;width:104px;height:16.645px;line-height:16.645px;">WS0853.04.17</div>
<div class="cell" style="left:183.3px;top:624.66px;width:184.4px;height:16.645px;line-height:16.645px;">4/23/2017 2:39:00 PM</div>
<div class="cell" style="left:367.7px;top:624.66px;width:87.3px;height:16.645px;line-height:16.645px;">2017-04-30</div>
<div class="cell" style="left:455px;top:624.66px;width:319.2px;height:16.645px;line-height:16.645px;letter-spacing:-0.171px;">SmartLynx Airlines Estonia OU</div>
<div class="cell" style="left:894.2px;top:624.66px;width:167.5px;height:16.645px;line-height:16.645px;letter-spacing:0.042px;">C0020984</div>
<div class="cell" style="left:1061.7px;top:624.66px;width:247.5px;height:16.645px;line-height:16.645px;letter-spacing:-0.8px;">NA</div>
<div class="cell" style="left:1309.2px;top:624.66px;width:35.6px;height:16.645px;line-height:16.645px;letter-spacing:-0.8px;">NA</div>
<div style="left:79.3px;top:640.305px;width:1265.5px;height:1px;background:#cccccc;"></div>
<div style="left:79.3px;top:641.305px;width:1265.5px;height:16.645px;background:#fff;"></div>
<div class="cell idc" style="left:31.8px;top:641.305px;width:47.5px;height:16.645px;line-height:16.645px;padding-left:2.4px;">24264</div>
<div class="cell" style="left:79.3px;top:641.305px;width:104px;height:16.645px;line-height:16.645px;">WS0846.04.17</div>
<div class="cell" style="left:183.3px;top:641.305px;width:184.4px;height:16.645px;line-height:16.645px;">4/20/2017 2:10:00 PM</div>
<div class="cell" style="left:367.7px;top:641.305px;width:87.3px;height:16.645px;line-height:16.645px;">2017-04-24</div>
<div class="cell" style="left:455px;top:641.305px;width:319.2px;height:16.645px;line-height:16.645px;letter-spacing:-0.032px;">Polar Aviation Oy</div>
<div class="cell" style="left:894.2px;top:641.305px;width:167.5px;height:16.645px;line-height:16.645px;letter-spacing:-0.009px;">PA17-00215</div>
<div class="cell" style="left:1061.7px;top:641.305px;width:247.5px;height:16.645px;line-height:16.645px;letter-spacing:-0.095px;">B737-400F</div>
<div class="cell" style="left:1309.2px;top:641.305px;width:35.6px;height:16.645px;line-height:16.645px;">25052</div>
<div style="left:79.3px;top:656.95px;width:1265.5px;height:1px;background:#cccccc;"></div>
<div style="left:79.3px;top:657.95px;width:1265.5px;height:3.05px;background:#fff;"></div>
<div class="cell idc" style="left:31.8px;top:657.95px;width:47.5px;height:3.05px;line-height:16.645px;padding-left:2.4px;box-shadow:inset -1px 0 0 #404040;"></div>
<div style="left:182.8px;top:158.6px;width:1px;height:502.4px;background:#cccccc;"></div>
<div style="left:367.2px;top:158.6px;width:1px;height:502.4px;background:#cccccc;"></div>
<div style="left:454.5px;top:158.6px;width:1px;height:502.4px;background:#cccccc;"></div>
<div style="left:773.7px;top:158.6px;width:1px;height:502.4px;background:#cccccc;"></div>
<div style="left:893.7px;top:158.6px;width:1px;height:502.4px;background:#cccccc;"></div>
<div style="left:1061.2px;top:158.6px;width:1px;height:502.4px;background:#cccccc;"></div>
<div style="left:1308.7px;top:158.6px;width:1px;height:502.4px;background:#cccccc;"></div>
<div class="track" style="left:1344.8px;top:142.3px;width:13.8px;height:518.5px;"></div>
<div class="sbb" style="left:1344.8px;top:142.3px;width:13.8px;height:13px;"></div>
<svg style="position:absolute;left:1348.2px;top:146.8px" width="7" height="4" viewBox="0 0 7 4"><path d="M0 4 L7 4 L3.5 0 Z" fill="#000"/></svg>
<div class="sbb" style="left:1344.8px;top:155.3px;width:13.8px;height:14px;"></div>
<div class="sbb" style="left:1344.8px;top:647.3px;width:13.8px;height:13.5px;"></div>
<svg style="position:absolute;left:1348.2px;top:652.3px" width="7" height="4" viewBox="0 0 7 4"><path d="M0 0 L7 0 L3.5 4 Z" fill="#000"/></svg>
<div class="track" style="left:31.8px;top:661px;width:1313px;height:13.5px;"></div>
<div class="sbb" style="left:31.8px;top:661px;width:13.7px;height:13.5px;"></div>
<svg style="position:absolute;left:35.8px;top:664.3px" width="4" height="7" viewBox="0 0 4 7"><path d="M4 0 L4 7 L0 3.5 Z" fill="#000"/></svg>
<div class="sbb" style="left:45.5px;top:661px;width:14px;height:13.5px;"></div>
<div class="sbb" style="left:1331.2px;top:661px;width:13.6px;height:13.5px;"></div>
<svg style="position:absolute;left:1336.2px;top:664.3px" width="4" height="7" viewBox="0 0 4 7"><path d="M0 0 L0 7 L4 3.5 Z" fill="#000"/></svg>
<div style="left:1344.8px;top:660.8px;width:13.8px;height:14.5px;background:#d4d0c8;"></div>
<div class="sunk1" style="left:29px;top:679px;width:175px;height:13px;"></div>
<div class="t" style="left:32.5px;top:680.8px;font-size:8px;line-height:10px;">Found 20978 Work Orders</div>
<div class="btnl" style="left:207.5px;top:677.8px;width:56.5px;height:18px;font-size:13px;line-height:20px;color:#8888b0;">Prev</div>
<div class="t" style="left:275px;top:678.4px;font-size:13.8px;line-height:16px;color:#20204a;">Page 1 of 21</div>
<div class="btnl" style="left:364px;top:677.8px;width:58px;height:18px;font-size:11.6px;line-height:21px;color:#101028;">Next</div>
<div style="left:743px;top:679.3px;width:30.3px;height:18.7px;background:#ffdcbc;"></div>
<div class="t" style="left:786px;top:680.2px;font-size:13.5px;line-height:16px;color:#2c2c34;">Overdue</div>
<div style="left:883px;top:679.3px;width:30.3px;height:18.7px;background:#c0ffc0;"></div>
<div class="t" style="left:926px;top:680.2px;font-size:13.5px;line-height:16px;color:#2c2c34;">:Shortage is Ready</div>
<div style="left:1079.4px;top:679.3px;width:30.3px;height:18.7px;background:#ffffc0;"></div>
<div class="t" style="left:1121.5px;top:680.2px;font-size:13.5px;line-height:16px;color:#2c2c34;">:Shortage In Order</div>
<div style="left:1275px;top:679.3px;width:30.3px;height:18.7px;background:#ff8080;"></div>
<div class="t" style="left:1317.8px;top:680.2px;font-size:13.5px;line-height:16px;color:#2c2c34;">:AOG</div>
<div style="left:567.5px;top:331.3px;width:275.3px;height:126.7px;background:#d4d0c8;box-shadow:inset 1px 1px 0 #d4d0c8,inset -1px -1px 0 #404040,inset 2px 2px 0 #fff,inset -2px -2px 0 #808080;"></div>
<div style="left:569.8px;top:333.7px;width:270.7px;height:15.7px;background:#0a246a;"></div>
<div class="t" style="left:571.5px;top:335.2px;font-weight:bold;font-size:10.3px;line-height:13px;color:#fff;">Change Status</div>
<div class="sbb" style="left:824.2px;top:336.2px;width:13.4px;height:11.4px;"></div>
<svg style="position:absolute;left:827.2px;top:338.4px" width="7.5" height="7" viewBox="0 0 7.5 7"><path d="M0.5 0.5 L7 6.5 M7 0.5 L0.5 6.5" stroke="#808080" stroke-width="1.3"/></svg>
<div style="left:569.8px;top:349.4px;width:270.7px;height:69.3px;background:#fff;"></div>
<svg style="position:absolute;left:588px;top:369.6px" width="29" height="29" viewBox="0 0 30 30"><defs><radialGradient id="qg" cx="40%" cy="30%" r="75%"><stop offset="0" stop-color="#6f9be8"/><stop offset="0.55" stop-color="#2a55c0"/><stop offset="1" stop-color="#0c2a80"/></radialGradient></defs><circle cx="15" cy="15" r="14.2" fill="#e4e8f0" stroke="#9aa4b8" stroke-width="0.8"/><circle cx="15" cy="15" r="12.6" fill="url(#qg)"/><text x="15" y="23" text-anchor="middle" font-family="Liberation Sans, sans-serif" font-weight="bold" font-size="23" fill="#fff">?</text></svg>
<div class="t" style="left:623.7px;top:380.3px;font-size:9.5px;line-height:12px;">Confirm Change Work Order Status to Open!</div>
<div class="raised" style="left:695px;top:427.2px;width:66px;height:20.4px;font-size:9.5px;line-height:20px;text-align:center;">Yes</div>
<div style="left:767px;top:427.2px;width:66px;height:20.4px;font-size:9.5px;line-height:18px;text-align:center;border:1px solid #000;box-shadow:inset 1px 1px 0 #fff,inset -1px -1px 0 #404040,inset -2px -2px 0 #808080;">No</div>
<svg style="position:absolute;left:700px;top:420px" width="180" height="180" viewBox="0 0 180 180"><path d="M16.3 18 L130.8 114.8 L100.5 141.5 Z" fill="#0c96fc"/><circle cx="124.6" cy="138.5" r="22.6" fill="#fff" stroke="#202020" stroke-width="1"/><circle cx="124.6" cy="138.5" r="20.6" fill="#0c96fc"/><text x="124.8" y="147" text-anchor="middle" font-family="DejaVu Sans, sans-serif" font-weight="bold" font-size="21" fill="#fff">7</text></svg>
</div></body></html>
